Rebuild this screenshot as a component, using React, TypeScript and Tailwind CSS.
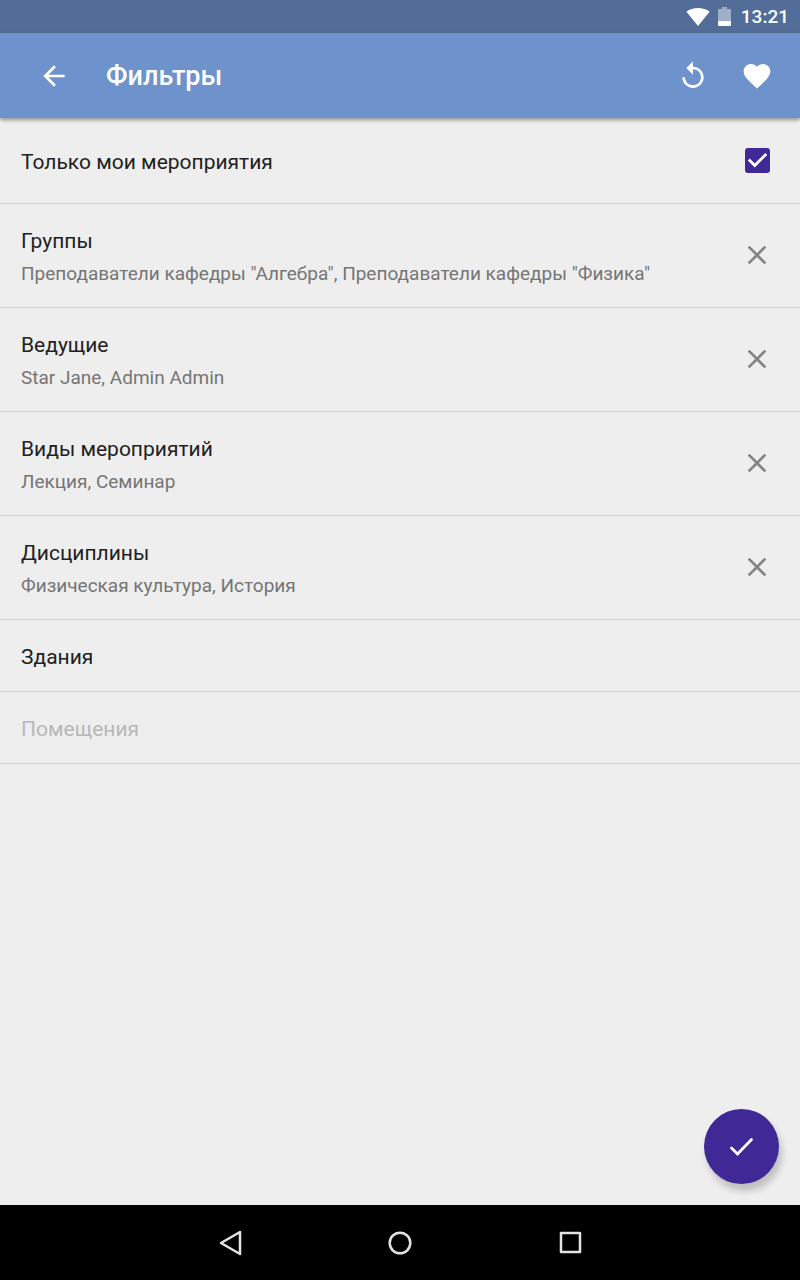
import { useState } from "react";

type Filter = { title: string; value?: string; disabled?: boolean };

const initialFilters: Filter[] = [
  { title: "Группы", value: 'Преподаватели кафедры "Алгебра", Преподаватели кафедры "Физика"' },
  { title: "Ведущие", value: "Star Jane, Admin Admin" },
  { title: "Виды мероприятий", value: "Лекция, Семинар" },
  { title: "Дисциплины", value: "Физическая культура, История" },
  { title: "Здания" },
  { title: "Помещения", disabled: true },
];

function Icon({ d }: { d: string }) {
  return (
    <svg viewBox="0 0 24 24" fill="currentColor" className="size-8" aria-hidden="true">
      <path d={d} />
    </svg>
  );
}

const BACK = "M20 11H7.83l5.59-5.59L12 4l-8 8 8 8 1.41-1.41L7.83 13H20v-2z";
const REPLAY = "M12 5V1L7 6l5 5V7c3.31 0 6 2.69 6 6s-2.69 6-6 6-6-2.69-6-6H4c0 4.42 3.58 8 8 8s8-3.58 8-8-3.58-8-8-8z";
const HEART =
  "M12 21.35l-1.45-1.32C5.4 15.36 2 12.28 2 8.5 2 5.42 4.42 3 7.5 3c1.74 0 3.41.81 4.5 2.09C13.09 3.81 14.76 3 16.5 3 19.58 3 22 5.42 22 8.5c0 3.78-3.4 6.86-8.55 11.54L12 21.35z";
const CLOSE = "M19 6.41L17.59 5 12 10.59 6.41 5 5 6.41 10.59 12 5 17.59 6.41 19 12 13.41 17.59 19 19 17.59 13.41 12z";

function StatusBar() {
  return (
    <div className="flex h-[33px] items-center justify-end bg-[#526e98] pr-[11px] text-white">
      <svg viewBox="0 0 24 18" fill="currentColor" className="mr-2 h-[18px] w-6" aria-hidden="true">
        <path d="M12 18L.4 3.7C3.6 1.3 7.6 0 12 0s8.400 1.300 11.600 3.700z" />
      </svg>
      <svg viewBox="0 0 13 19" fill="currentColor" className="mr-2.5 h-[19px] w-[13px]" aria-hidden="true">
        <path opacity=".45" d="M4 0h5v2h3q1 0 1 1v11H0V3q0-1 1-1h3z" />
        <path d="M0 14h13v4q0 1-1 1H1q-1 0-1-1z" />
      </svg>
      <span className="text-[19px] leading-6 font-medium">13:21</span>
    </div>
  );
}

export default function App() {
  const [onlyMine, setOnlyMine] = useState(true);
  const [filters, setFilters] = useState(initialFilters);

  const clear = (title: string) =>
    setFilters(filters.map((f) => (f.title === title ? { ...f, value: undefined } : f)));

  return (
    <div className="flex min-h-screen flex-col bg-[#eeeeee] font-['Roboto',sans-serif] text-[#212121]">
      <StatusBar />
      <header className="flex h-[85px] items-center bg-[#6e92cc] pr-[27px] pl-[38px] text-white shadow-[0_2px_4px_rgba(0,0,0,0.4)]">
        <button type="button" aria-label="Назад">
          <Icon d={BACK} />
        </button>
        <h1 className="ml-9 flex-1 text-[27px] leading-8 font-medium">Фильтры</h1>
        <div className="flex gap-8">
          <button type="button" aria-label="Сбросить">
            <Icon d={REPLAY} />
          </button>
          <button type="button" aria-label="Избранное">
            <Icon d={HEART} />
          </button>
        </div>
      </header>

      <main className="flex flex-1 flex-col">
        <label className="flex items-start justify-between border-b border-[#cfcfcf] pt-[30px] pr-[30px] pb-[27px] pl-[21px]">
          <span className="text-[21px] leading-7">Только мои мероприятия</span>
          <span className="grid size-[25px] place-items-center">
            <input
              type="checkbox"
              checked={onlyMine}
              onChange={(e) => setOnlyMine(e.target.checked)}
              className="col-start-1 row-start-1 size-[25px] appearance-none rounded-[3px] border-2 border-[#757575] checked:border-[#402896] checked:bg-[#402896]"
            />
            {onlyMine && (
              <svg viewBox="3 3 18 18" fill="#fff" className="pointer-events-none col-start-1 row-start-1 size-[25px]" aria-hidden="true">
                <path d="M10 17l-5-5 1.410-1.410L10 14.170l7.590-7.590L19 8z" />
              </svg>
            )}
          </span>
        </label>

        <ul>
          {filters.map((f) => (
            <li key={f.title} className="flex items-start border-b border-[#cfcfcf] pr-[27px] pl-[21px]">
              <button
                type="button"
                disabled={f.disabled}
                className="flex flex-1 flex-col pt-[23px] pb-5 text-left disabled:text-[#b8b8b8]"
              >
                <span className="text-[21px] leading-7">{f.title}</span>
                {f.value && <span className="pt-1.5 text-[19px] leading-[26px] text-[#757575]">{f.value}</span>}
              </button>
              {f.value && (
                <button
                  type="button"
                  aria-label={`Очистить: ${f.title}`}
                  onClick={() => clear(f.title)}
                  className="mt-[35px] text-[#858585]"
                >
                  <Icon d={CLOSE} />
                </button>
              )}
            </li>
          ))}
        </ul>

        <button
          type="button"
          aria-label="Применить"
          className="mt-auto mr-[21px] mb-[21px] grid size-[75px] place-items-center self-end rounded-full bg-[#402896] text-white shadow-[3px_7px_7px_rgba(0,0,0,0.2)]"
        >
          <svg
            viewBox="0 0 32 32"
            fill="none"
            stroke="currentColor"
            strokeWidth="2.800"
            strokeLinecap="round"
            className="size-8"
            aria-hidden="true"
          >
            <path d="M5.500 17l6 6L25.500 8.500" />
          </svg>
        </button>
      </main>

      <nav className="flex h-[75px] items-center justify-center gap-[138px] bg-black pb-0.5 text-[#e4e4e4]">
        <button type="button" aria-label="Предыдущий экран">
          <svg viewBox="0 0 32 32" fill="none" stroke="currentColor" strokeWidth="2.500" strokeLinejoin="round" className="size-8">
            <path d="M7 17L26 6v22z" />
          </svg>
        </button>
        <button type="button" aria-label="Домой">
          <svg viewBox="0 0 32 32" fill="none" stroke="currentColor" strokeWidth="2.500" className="size-8">
            <circle cx="16" cy="17" r="10.300" />
          </svg>
        </button>
        <button type="button" aria-label="Недавние">
          <svg viewBox="0 0 32 32" fill="none" stroke="currentColor" strokeWidth="2.500" strokeLinejoin="round" className="size-8">
            <rect x="7" y="7" width="19" height="19" />
          </svg>
        </button>
      </nav>
    </div>
  );
}
